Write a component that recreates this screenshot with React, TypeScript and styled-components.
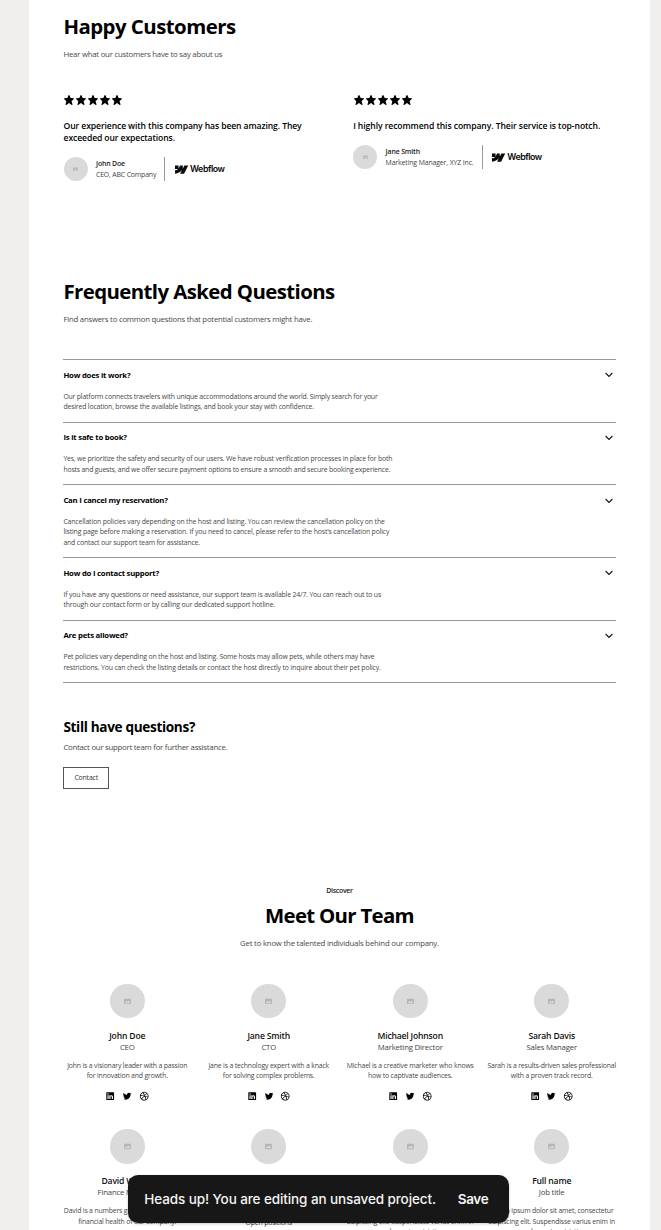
import React from "react";
import styled, { createGlobalStyle } from "styled-components";
import { SiWebflow } from "react-icons/si";
import { BiSolidStar, BiLogoLinkedinSquare, BiLogoTwitter, BiLogoDribbble } from "react-icons/bi";

const GlobalStyle = createGlobalStyle`
  * { box-sizing: border-box; }
  body {
    margin: 0;
    background: #f0efed;
    font-family: "Open Sans", "Noto Sans", sans-serif;
    overflow: hidden;
  }
  h2, h3, h4, p { margin: 0; }
`;

const Viewport = styled.div`
  height: 1230px;
  overflow: hidden;
  padding: 0 11px 0 29px;
`;

const Page = styled.main`
  height: 100%;
  background: #fff;
  padding: 14px 34.4px 0 34.4px;
`;

const Title = styled.h2<{ $tracking?: number }>`
  font-size: 20.4px;
  line-height: 25px;
  font-weight: 700;
  color: #000;
  letter-spacing: ${(p) => p.$tracking ?? -0.53}px;
  white-space: nowrap;
`;

const Lead = styled.p`
  font-size: 7.75px;
  line-height: 12px;
  color: #484848;
  letter-spacing: -0.212px;
  white-space: nowrap;
`;

/* Testimonials */

const Testimonials = styled.section`
  height: 265px;
  ${Lead} { margin-top: 9px; }
`;

const QuoteGrid = styled.div`
  display: grid;
  grid-template-columns: 262px 262px;
  column-gap: 27.6px;
  margin-top: 34px;
  padding-left: 0.2px;
  align-items: start;
`;

const Stars = styled.div`
  display: flex;
  height: 12px;
  align-items: center;
  margin-left: -0.6px;
  svg { width: 12px; height: 12px; display: block; }
`;

const Quote = styled.p<{ $tracking: number }>`
  margin-top: 14px;
  font-size: 8.6px;
  line-height: 12px;
  font-weight: 600;
  color: #000;
  white-space: pre;
  letter-spacing: ${(p) => p.$tracking}px;
`;

const Author = styled.div`
  display: flex;
  align-items: center;
  height: 24px;
  margin-top: 13px;
`;

const AuthorText = styled.div<{ $tracking: number }>`
  margin: 0 8.2px 0 8.4px;
  padding-top: 1px;
  font-size: 6.9px;
  line-height: 10.3px;
  color: #444;
  letter-spacing: ${(p) => p.$tracking}px;
  white-space: nowrap;
`;

const AuthorName = styled.div`
  font-weight: 600;
  color: #222;
`;

const Divider = styled.div`
  width: 1px;
  height: 24px;
  background: #999;
  margin-right: 9.3px;
`;

const Brand = styled.div`
  display: flex;
  align-items: center;
  gap: 2px;
  padding-top: 1px;
  color: #0a0a0a;
  font: 600 8.9px/12px "Inter", sans-serif;
  letter-spacing: -0.48px;
  svg { width: 13.3px; height: 13.3px; }
`;

const Avatar = styled.div<{ $size: number }>`
  flex: none;
  width: ${(p) => p.$size}px;
  height: ${(p) => p.$size}px;
  border-radius: 50%;
  background: #dadada;
  display: flex;
  align-items: center;
  justify-content: center;
  svg { width: 20%; height: 20%; display: block; }
`;

/* FAQ */

const Faq = styled.section`
  height: 599px;
  ${Lead} { margin-top: 9px; }
`;

const FaqList = styled.div`
  margin-top: 34.1px;
  border-bottom: 1px solid #999;
`;

const FaqItem = styled.article`
  border-top: 1px solid #999;
  padding: 8.5px 0 9.2px;
`;

const Question = styled.div`
  display: flex;
  align-items: center;
  justify-content: space-between;
  height: 12px;
  padding-right: 3px;
  font-size: 7.75px;
  line-height: 12px;
  font-weight: 700;
  color: #000;
  letter-spacing: -0.22px;
  svg { width: 8px; height: 8px; margin-top: 1.6px; }
`;

const Answer = styled.p`
  margin-top: 11.2px;
  font-size: 6.9px;
  line-height: 10.35px;
  color: #484848;
  white-space: pre;
`;

const AnswerLine = styled.span<{ $tracking: number }>`
  display: block;
  letter-spacing: ${(p) => p.$tracking}px;
`;

const Support = styled.div`
  margin-top: 34.9px;
  ${Lead} { margin-top: 6px; letter-spacing: -0.228px; }
`;

const SupportTitle = styled.h3`
  font-size: 13.6px;
  line-height: 17px;
  font-weight: 700;
  letter-spacing: -0.34px;
`;

const ContactButton = styled.button`
  display: block;
  margin-top: 13.6px;
  width: 45.6px;
  height: 22px;
  padding: 0;
  border: 1px solid #555;
  background: #fff;
  font: 400 6.9px/10px "Open Sans", sans-serif;
  letter-spacing: -0.19px;
  color: #333;
`;

/* Team */

const Team = styled.section`
  display: flex;
  flex-direction: column;
  align-items: center;
  padding-top: 8px;
  ${Title} { margin-top: 7px; }
  ${Lead} { margin-top: 9px; letter-spacing: -0.19px; }
`;

const Eyebrow = styled.div`
  font-size: 6.9px;
  line-height: 10px;
  font-weight: 600;
  color: #222;
  letter-spacing: -0.24px;
`;

const TeamGrid = styled.div`
  align-self: stretch;
  display: grid;
  grid-template-columns: repeat(4, 127.7px);
  column-gap: 13.8px;
  grid-auto-rows: 145.3px;
  margin-top: 34.7px;
`;

const Member = styled.article`
  display: flex;
  flex-direction: column;
  align-items: center;
  text-align: center;
`;

const MemberName = styled.h4`
  margin-top: 11.7px;
  font-size: 8.6px;
  line-height: 12.5px;
  font-weight: 600;
  color: #111;
  letter-spacing: -0.18px;
`;

const MemberRole = styled.div`
  margin-top: -0.5px;
  font-size: 7.75px;
  line-height: 11.6px;
  color: #444;
  letter-spacing: -0.17px;
`;

const Bio = styled.p`
  margin-top: 7.4px;
  font-size: 6.9px;
  line-height: 10.35px;
  color: #484848;
  letter-spacing: -0.17px;
  white-space: pre;
`;

const Socials = styled.div`
  display: flex;
  gap: 6.2px;
  margin-top: 9px;
  color: #000;
  svg { width: 10.4px; height: 10.4px; display: block; }
`;

const JobsLink = styled.div`
  margin-top: 7px;
  font-size: 6.9px;
  line-height: 10.35px;
  padding-top: 11.8px;
  color: #333;
  letter-spacing: -0.17px;
`;

const Toast = styled.div`
  position: absolute;
  left: 128.3px;
  top: 1175px;
  width: 381px;
  height: 48px;
  border-radius: 10px;
  background: #171717;
  box-shadow: 0 1px 3px rgba(0, 0, 0, 0.2);
  display: flex;
  align-items: center;
  padding: 0 21px 0 16px;
  justify-content: space-between;
  color: #f4f4f4;
  font: 500 13.5px/20px "Inter", sans-serif;
  letter-spacing: -0.1px;
  white-space: nowrap;
`;

const SaveAction = styled.span`
  font-weight: 600;
  letter-spacing: -0.35px;
`;

const PictureIcon = () => (
  <svg viewBox="0 0 20 20">
    <path fill="#b5b5b5" fillRule="evenodd" d="M2 2h16a2 2 0 0 1 2 2v12a2 2 0 0 1-2 2H2a2 2 0 0 1-2-2V4a2 2 0 0 1 2-2Zm1 13h14v-3l-4-5-4 5-3-3-3 4Z" />
  </svg>
);

const Chevron = () => (
  <svg viewBox="0 0 8 8" fill="none" stroke="#111" strokeWidth="1.1">
    <path d="M0.6 2 4 5.4 7.4 2" />
  </svg>
);

type Testimonial = { lines: string; tracking: number; name: string; role: string; roleTracking: number };

const testimonials: Testimonial[] = [
  {
    lines: "Our experience with this company has been amazing. They\nexceeded our expectations.",
    tracking: -0.105,
    name: "John Doe",
    role: "CEO, ABC Company",
    roleTracking: -0.15,
  },
  {
    lines: "I highly recommend this company. Their service is top-notch.",
    tracking: -0.078,
    name: "Jane Smith",
    role: "Marketing Manager, XYZ Inc.",
    roleTracking: -0.12,
  },
];

const faqs: { q: string; a: [string, number][] }[] = [
  {
    q: "How does it work?",
    a: [
      ["Our platform connects travelers with unique accommodations around the world. Simply search for your", -0.188],
      ["desired location, browse the available listings, and book your stay with confidence.", -0.165],
    ],
  },
  {
    q: "Is it safe to book?",
    a: [
      ["Yes, we prioritize the safety and security of our users. We have robust verification processes in place for both", -0.178],
      ["hosts and guests, and we offer secure payment options to ensure a smooth and secure booking experience.", -0.185],
    ],
  },
  {
    q: "Can I cancel my reservation?",
    a: [
      ["Cancellation policies vary depending on the host and listing. You can review the cancellation policy on the", -0.148],
      ["listing page before making a reservation. If you need to cancel, please refer to the host's cancellation policy", -0.148],
      ["and contact our support team for assistance.", -0.17],
    ],
  },
  {
    q: "How do I contact support?",
    a: [
      ["If you have any questions or need assistance, our support team is available 24/7. You can reach out to us", -0.17],
      ["through our contact form or by calling our dedicated support hotline.", -0.145],
    ],
  },
  {
    q: "Are pets allowed?",
    a: [
      ["Pet policies vary depending on the host and listing. Some hosts may allow pets, while others may have", -0.16],
      ["restrictions. You can check the listing details or contact the host directly to inquire about their pet policy.", -0.152],
    ],
  },
];

const lorem = "Lorem ipsum dolor sit amet, consectetur\nadipiscing elit. Suspendisse varius enim in\neros elementum tristique.";

const members = [
  { name: "John Doe", role: "CEO", bio: "John is a visionary leader with a passion\nfor innovation and growth." },
  { name: "Jane Smith", role: "CTO", bio: "Jane is a technology expert with a knack\nfor solving complex problems." },
  { name: "Michael Johnson", role: "Marketing Director", bio: "Michael is a creative marketer who knows\nhow to captivate audiences." },
  { name: "Sarah Davis", role: "Sales Manager", bio: "Sarah is a results-driven sales professional\nwith a proven track record." },
  { name: "David Wilson", role: "Finance Manager", bio: "David is a numbers guru who ensures the\nfinancial health of our company." },
  { name: "", role: "", bio: "", link: "Open positions" },
  { name: "Full name", role: "Job title", bio: lorem },
  { name: "Full name", role: "Job title", bio: lorem },
];

export default function App() {
  return (
    <>
      <GlobalStyle />
      <Viewport>
        <Page>
          <Testimonials>
            <Title>Happy Customers</Title>
            <Lead>Hear what our customers have to say about us</Lead>
            <QuoteGrid>
              {testimonials.map((t) => (
                <div key={t.name}>
                  <Stars>
                    {[0, 1, 2, 3, 4].map((i) => (
                      <BiSolidStar key={i} />
                    ))}
                  </Stars>
                  <Quote $tracking={t.tracking}>{t.lines}</Quote>
                  <Author>
                    <Avatar $size={24}>
                      <PictureIcon />
                    </Avatar>
                    <AuthorText $tracking={t.roleTracking}>
                      <AuthorName>{t.name}</AuthorName>
                      {t.role}
                    </AuthorText>
                    <Divider />
                    <Brand>
                      <SiWebflow />
                      Webflow
                    </Brand>
                  </Author>
                </div>
              ))}
            </QuoteGrid>
          </Testimonials>

          <Faq>
            <Title $tracking={-0.58}>Frequently Asked Questions</Title>
            <Lead>Find answers to common questions that potential customers might have.</Lead>
            <FaqList>
              {faqs.map((f) => (
                <FaqItem key={f.q}>
                  <Question>
                    {f.q}
                    <Chevron />
                  </Question>
                  <Answer>
                    {f.a.map(([text, tracking]) => (
                      <AnswerLine key={text} $tracking={tracking}>
                        {text}
                      </AnswerLine>
                    ))}
                  </Answer>
                </FaqItem>
              ))}
            </FaqList>
            <Support>
              <SupportTitle>Still have questions?</SupportTitle>
              <Lead>Contact our support team for further assistance.</Lead>
              <ContactButton>Contact</ContactButton>
            </Support>
          </Faq>

          <Team>
            <Eyebrow>Discover</Eyebrow>
            <Title $tracking={-0.69}>Meet Our Team</Title>
            <Lead>Get to know the talented individuals behind our company.</Lead>
            <TeamGrid>
              {members.map((m, i) => (
                <Member key={i}>
                  <Avatar $size={34.6}>
                    <PictureIcon />
                  </Avatar>
                  <MemberName>{m.name || "\u00a0"}</MemberName>
                  <MemberRole>{m.role || "\u00a0"}</MemberRole>
                  {m.link ? (
                    <JobsLink>{m.link}</JobsLink>
                  ) : (
                    <>
                      <Bio>{m.bio}</Bio>
                      <Socials>
                        <BiLogoLinkedinSquare />
                        <BiLogoTwitter />
                        <BiLogoDribbble />
                      </Socials>
                    </>
                  )}
                </Member>
              ))}
            </TeamGrid>
          </Team>
        </Page>
      </Viewport>
      <Toast>
        <span>Heads up! You are editing an unsaved project.</span>
        <SaveAction>Save</SaveAction>
      </Toast>
    </>
  );
}
